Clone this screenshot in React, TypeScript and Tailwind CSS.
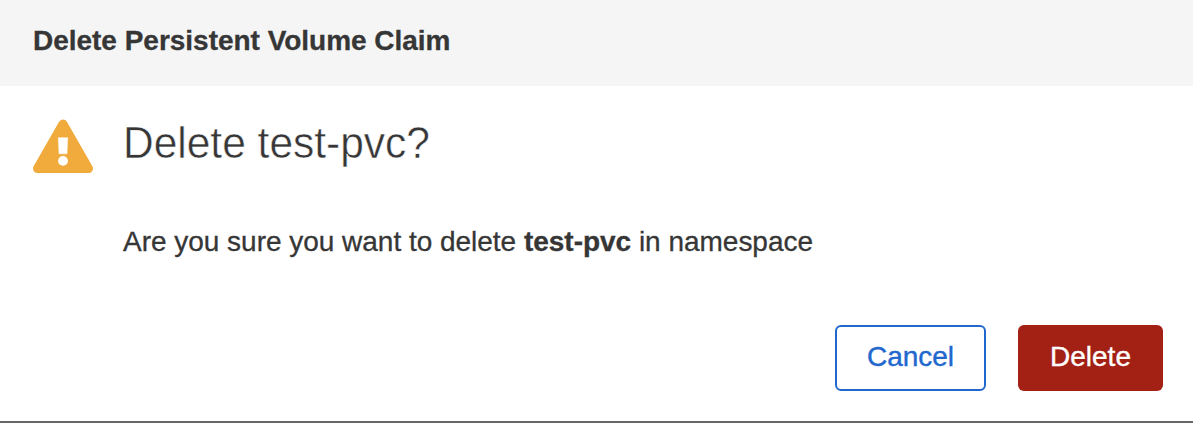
export default function App() {
  return (
    <div className="flex h-[423px] w-[1193px] flex-col border-b-2 border-[#666666] bg-white font-['Liberation_Sans',Arial,sans-serif] text-[#363636]">
      <header className="flex h-[86px] shrink-0 items-center bg-[#f5f5f5] pb-[5px] pl-[33px]">
        <h1 className="whitespace-nowrap text-[28px] font-bold leading-8 tracking-[-0.020px] [-webkit-text-stroke:0.3px_#363636]">Delete Persistent Volume Claim</h1>
      </header>
      <main className="flex pl-8 pt-[32px]">
        <svg className="h-[56px] w-[62px] shrink-0" viewBox="0 0 62 56" fill="none">
          <path d="M31 6L56.500 50.500H5.500Z" fill="#f0ab3c" stroke="#f0ab3c" strokeWidth="9" strokeLinejoin="round" />
          <path d="M26.300 19.700H35.700L35 35.800H27Z" fill="#fff" stroke="#fff" strokeWidth="0.500" strokeLinejoin="round" />
          <circle cx="31" cy="42.900" r="4.900" fill="#fff" />
        </svg>
        <div className="ml-[29px]">
          <h2 className="w-fit origin-left scale-x-[0.944] whitespace-nowrap text-[45px] leading-[50px] [-webkit-text-stroke:0.5px_white]">Delete test-pvc?</h2>
          <p className="mt-[58px] whitespace-nowrap text-[28px] leading-8 tracking-[-0.020px] [-webkit-text-stroke:0.3px_#363636]">
            Are you sure you want to delete <strong>test-pvc</strong> in namespace
          </p>
        </div>
      </main>
      <footer className="mb-[30px] mr-[30px] mt-auto flex justify-end gap-8">
        <button className="h-[66px] w-[151px] rounded-[6px] border-2 border-[#2168ce] bg-white pb-0.5 text-[28px] leading-8 text-[#2168ce] [-webkit-text-stroke:0.4px_#2168ce]">Cancel</button>
        <button className="h-[66px] w-[145px] rounded-[6px] bg-[#a32015] pb-0.5 text-[28px] leading-8 text-white [-webkit-text-stroke:0.4px_white]">Delete</button>
      </footer>
    </div>
  );
}
